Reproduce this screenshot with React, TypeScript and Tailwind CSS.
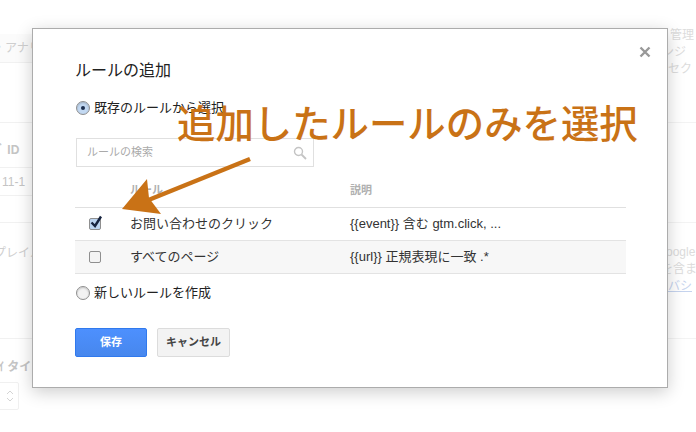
const jp = "font-['Liberation_Sans','Noto_Sans_CJK_JP',sans-serif]";

function Radio({ checked }: { checked?: boolean }) {
  return (
    <span
      className={`flex h-[14px] w-[14px] shrink-0 items-center justify-center rounded-full border border-[#8f8f8f] shadow-[inset_0_1px_2px_rgba(0,0,0,0.2)] ${
        checked ? "bg-[#c3d9f2]" : "bg-[#f3f3f3]"
      }`}
    >
      {checked && <span className="h-[4px] w-[4px] rounded-full bg-[#1c2f4f]" />}
    </span>
  );
}

function Checkbox({ checked }: { checked?: boolean }) {
  return (
    <span
      className={`relative block h-[12px] w-[12px] rounded-[2px] border border-[#8f8f8f] ${
        checked ? "bg-[#bcd4f0]" : "bg-[#f4f4f4]"
      }`}
    >
      {checked && (
        <svg viewBox="0 0 14 14" className="absolute left-[-1px] top-[-4px] h-[14px] w-[14px]">
          <path d="M2.5 7.5 L6 11 L12 1.5" fill="none" stroke="#16233f" strokeWidth="2.4" />
        </svg>
      )}
    </span>
  );
}

function Row({ name, desc, shaded, checked }: { name: string; desc: string; shaded?: boolean; checked?: boolean }) {
  return (
    <div className={`flex h-[33px] items-center border-b border-[#e3e3e3] text-[13px] text-[#333] ${shaded ? "bg-[#f7f7f7]" : ""}`}>
      <div className="w-[55px] pl-[14px]">
        <Checkbox checked={checked} />
      </div>
      <div className="w-[220px]">{name}</div>
      <div>{desc}</div>
    </div>
  );
}

export default function App() {
  return (
    <div className={`relative flex h-[432px] w-[696px] justify-between overflow-hidden bg-white ${jp}`}>
      {/* ページ背景 左 */}
      <div className="flex w-[32px] flex-col overflow-hidden whitespace-nowrap pt-[34px] text-[12px] text-[#cfcfcf]">
        <div className="flex h-[29px] shrink-0 items-center border-b border-[#f1f1f1] bg-[#fbfbfb]">
          <span className="ml-[-7px]">・アナリ</span>
        </div>
        <div className="h-[60px] shrink-0 border-b border-[#f1f1f1]" />
        <div className="flex h-[45px] shrink-0 items-center border-b border-[#f1f1f1] pt-[10px] font-bold text-[#c4c4c4]">
          <span className="ml-[-2px]">ﾞ ID</span>
        </div>
        <div className="flex h-[28px] shrink-0 items-center border-b border-[#f1f1f1] pl-[2px] text-[#c4c4c4]">11-1</div>
        <div className="h-[27px] shrink-0 border-b border-[#f1f1f1]" />
        <div className="h-[116px] shrink-0 border-b border-[#f1f1f1] pt-[21px]">
          <div className="ml-[-6px]">プレイル</div>
        </div>
        <div className="h-[43px] shrink-0 pt-[19px] font-bold text-[#c4c4c4]">
          <div className="ml-[-2px]">ｲ タイ</div>
        </div>
        <div className="ml-[-4px] flex h-[28px] w-[23px] shrink-0 items-center justify-center rounded-[2px] border border-[#f0f0f0] pl-[5px]">
          <svg viewBox="0 0 10 18" className="h-[18px] w-[10px]">
            <path d="M2 7 L5 4 L8 7 M2 11 L5 14 L8 11" fill="none" stroke="#d4d4d4" strokeWidth="1" />
          </svg>
        </div>
      </div>

      {/* ページ背景 右 */}
      <div className="flex w-[29px] flex-col overflow-hidden whitespace-nowrap pt-[27px] text-[12px] leading-[17px] text-[#dcdcdc]">
        <div className="h-[96px] shrink-0 border-b border-[#f3f3f3]">
          <div className="ml-[3px]">管理</div>
          <div className="ml-[-5px]">ンジ</div>
          <div className="ml-[1px]">セク</div>
        </div>
        <div className="h-[100px] shrink-0 border-b border-[#f3f3f3]" />
        <div className="h-[116px] shrink-0 border-b border-[#f3f3f3] pt-[21px]">
          <div className="ml-[-1px]">oogle</div>
          <div className="ml-[-6px]">を含ま</div>
          <div className="ml-[1px] text-[#c5d3ee] underline">バシ</div>
        </div>
      </div>

      {/* ダイアログ */}
      <div className="absolute left-[32px] top-[28px] h-[360px] w-[636px] border border-[#acacac] bg-white px-[42px] pt-[32px] shadow-[0_4px_16px_rgba(0,0,0,0.2)]">
        <svg viewBox="0 0 12 12" className="absolute right-[16px] top-[17px] h-[12px] w-[12px]">
          <path d="M1.5 1.5 L10.5 10.5 M10.5 1.5 L1.5 10.5" stroke="#999" strokeWidth="2.4" />
        </svg>
        <h1 className="text-[16px] font-normal leading-[20px] text-[#222]">ルールの追加</h1>
        <label className="mt-[18px] flex h-[18px] items-center gap-[4px] pl-[1px] text-[13px] text-[#222]">
          <Radio checked />
          既存のルールから選択
        </label>
        <div className="relative ml-[1px] mt-[21px] flex h-[29px] w-[238px] items-center border border-[#e0e0e0] pl-[10px] text-[11px] text-[#aaa]">
          ルールの検索
          <svg viewBox="0 0 14 14" className="absolute right-[6px] top-[7px] h-[14px] w-[14px]">
            <circle cx="5.5" cy="5.5" r="4" fill="none" stroke="#c4c4c4" strokeWidth="1.4" />
            <path d="M8.5 8.5 L13 13" stroke="#c4c4c4" strokeWidth="1.8" />
          </svg>
        </div>
        <div className="mt-[14px] w-[551px]">
          <div className="flex h-[27px] items-center border-b border-[#e0e0e0] pb-[8px] text-[11px] font-bold text-[#b0b0b0]">
            <div className="ml-[55px] w-[220px]">ルール</div>
            <div>説明</div>
          </div>
          <Row name="お問い合わせのクリック" desc="{{event}} 含む gtm.click, ..." checked />
          <Row name="すべてのページ" desc="{{url}} 正規表現に一致 .*" shaded />
        </div>
        <label className="mt-[10px] flex h-[18px] items-center gap-[4px] pl-[1px] text-[13px] text-[#222]">
          <Radio />
          新しいルールを作成
        </label>
        <div className="mt-[26px] flex gap-[10px]">
          <button className="h-[29px] w-[72px] rounded-[2px] border border-[#3079ed] bg-gradient-to-b from-[#4d90fe] to-[#4787ed] text-[11px] font-bold text-white">
            保存
          </button>
          <button className="h-[29px] w-[73px] rounded-[2px] border border-[#dcdcdc] bg-[#f3f3f3] text-[11px] font-bold text-[#444]">
            キャンセル
          </button>
        </div>
      </div>

      {/* 注釈 */}
      <div className="absolute left-[177px] top-[103px] whitespace-nowrap text-[38.4px] font-medium leading-[44px] text-[#c97216]">
        追加したルールのみを選択
      </div>
      <svg viewBox="0 0 696 432" className="pointer-events-none absolute left-0 top-0 h-[432px] w-[696px]">
        <path d="M250 159 L146 201" stroke="#c97216" strokeWidth="4.5" fill="none" />
        <path d="M122 209 L147 179 L149 198 L161 214 Z" fill="#c97216" />
      </svg>
    </div>
  );
}
